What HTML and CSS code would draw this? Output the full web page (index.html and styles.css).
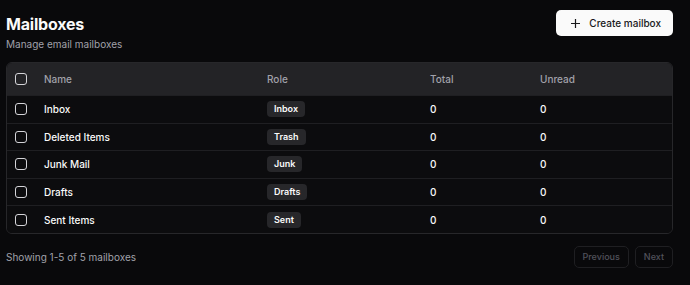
FILE: index.html
```html
<!DOCTYPE html>
<html lang="en">
<head>
    <meta charset="UTF-8">
    <meta name="viewport" content="width=device-width, initial-scale=1.0">
    <title>Mailboxes</title>
    <link rel="stylesheet" href="styles.css">
</head>
<body>
    <div class="page-head">
        <div class="head-text">
            <h1>Mailboxes</h1>
            <p class="subtitle">Manage email mailboxes</p>
        </div>
        <button class="create-btn">
            <svg width="9" height="9" viewBox="0 0 9 9"><path d="M4.5 0v9M0 4.5h9" stroke="#18181b" stroke-width="1.2" fill="none"/></svg>
            <span>Create mailbox</span>
        </button>
    </div>

    <div class="table-wrap">
        <table class="mailbox-table">
            <colgroup>
                <col class="c-check"><col class="c-name"><col class="c-role"><col class="c-total"><col class="c-unread">
            </colgroup>
            <thead>
                <tr>
                    <th><span class="check"></span></th>
                    <th>Name</th>
                    <th>Role</th>
                    <th>Total</th>
                    <th>Unread</th>
                </tr>
            </thead>
            <tbody>
                <tr><td><span class="check"></span></td><td>Inbox</td><td><span class="badge">Inbox</span></td><td>0</td><td>0</td></tr>
                <tr><td><span class="check"></span></td><td>Deleted Items</td><td><span class="badge">Trash</span></td><td>0</td><td>0</td></tr>
                <tr><td><span class="check"></span></td><td>Junk Mail</td><td><span class="badge">Junk</span></td><td>0</td><td>0</td></tr>
                <tr><td><span class="check"></span></td><td>Drafts</td><td><span class="badge">Drafts</span></td><td>0</td><td>0</td></tr>
                <tr><td><span class="check"></span></td><td>Sent Items</td><td><span class="badge">Sent</span></td><td>0</td><td>0</td></tr>
            </tbody>
        </table>
    </div>

    <div class="table-foot">
        <span class="count">Showing 1-5 of 5 mailboxes</span>
        <div class="pager">
            <button class="page-btn" disabled>Previous</button>
            <button class="page-btn" disabled>Next</button>
        </div>
    </div>
</body>
</html>
```

FILE: styles.css
```css
body {
    margin: 0;
    padding: 10px 17px 0 6px;
    background-color: #09090b;
    color: #fafafa;
    font-family: Inter, "Noto Sans", sans-serif;
}

.page-head {
    display: flex;
    justify-content: space-between;
    align-items: flex-start;
}

.head-text {
    padding-top: 4px;
}

h1 {
    margin: 0;
    font-size: 16px;
    line-height: 20px;
    font-weight: 700;
    letter-spacing: -0.2px;
}

.subtitle {
    margin: 3px 0 0;
    font-size: 10px;
    line-height: 14px;
    color: #a1a1aa;
}

.create-btn {
    display: flex;
    align-items: center;
    gap: 9px;
    height: 26px;
    padding: 0 12px 0 15px;
    background-color: #fafafa;
    color: #18181b;
    border: none;
    border-radius: 5px;
    font-family: inherit;
    font-size: 10px;
    font-weight: 500;
}

.table-wrap {
    margin-top: 11px;
    border: 1px solid #27272a;
    border-radius: 6px;
    overflow: hidden;
}

.mailbox-table {
    width: 100%;
    border-collapse: collapse;
    table-layout: fixed;
    font-size: 10px;
}

.c-check { width: 31px; }
.c-name { width: 223px; }
.c-role { width: 163px; }
.c-total { width: 110px; }

.mailbox-table th {
    height: 32px;
    padding: 0 6px;
    text-align: left;
    font-weight: 500;
    color: #a1a1aa;
    background-color: #232326;
}

.mailbox-table td {
    height: 26.6px;
    padding: 0 6px;
    font-weight: 500;
    background-color: #0c0c0e;
    border-top: 1px solid #1f1f22;
}

.mailbox-table th:first-child,
.mailbox-table td:first-child {
    padding-left: 8px;
}

.check {
    display: block;
    width: 10px;
    height: 10px;
    border: 1.5px solid #d4d4d8;
    border-radius: 3px;
}

.badge {
    display: inline-block;
    padding: 0 7px;
    line-height: 16px;
    border-radius: 4px;
    background-color: #27272a;
    font-size: 9px;
    font-weight: 600;
}

.table-foot {
    display: flex;
    justify-content: space-between;
    align-items: center;
    margin-top: 12px;
}

.count {
    font-size: 10px;
    color: #a1a1aa;
}

.pager {
    display: flex;
    gap: 6px;
}

.page-btn {
    height: 22px;
    padding: 0 8px;
    background-color: transparent;
    border: 1px solid #1f1f22;
    border-radius: 5px;
    color: #52525b;
    font-family: inherit;
    font-size: 9px;
    font-weight: 500;
}
```
